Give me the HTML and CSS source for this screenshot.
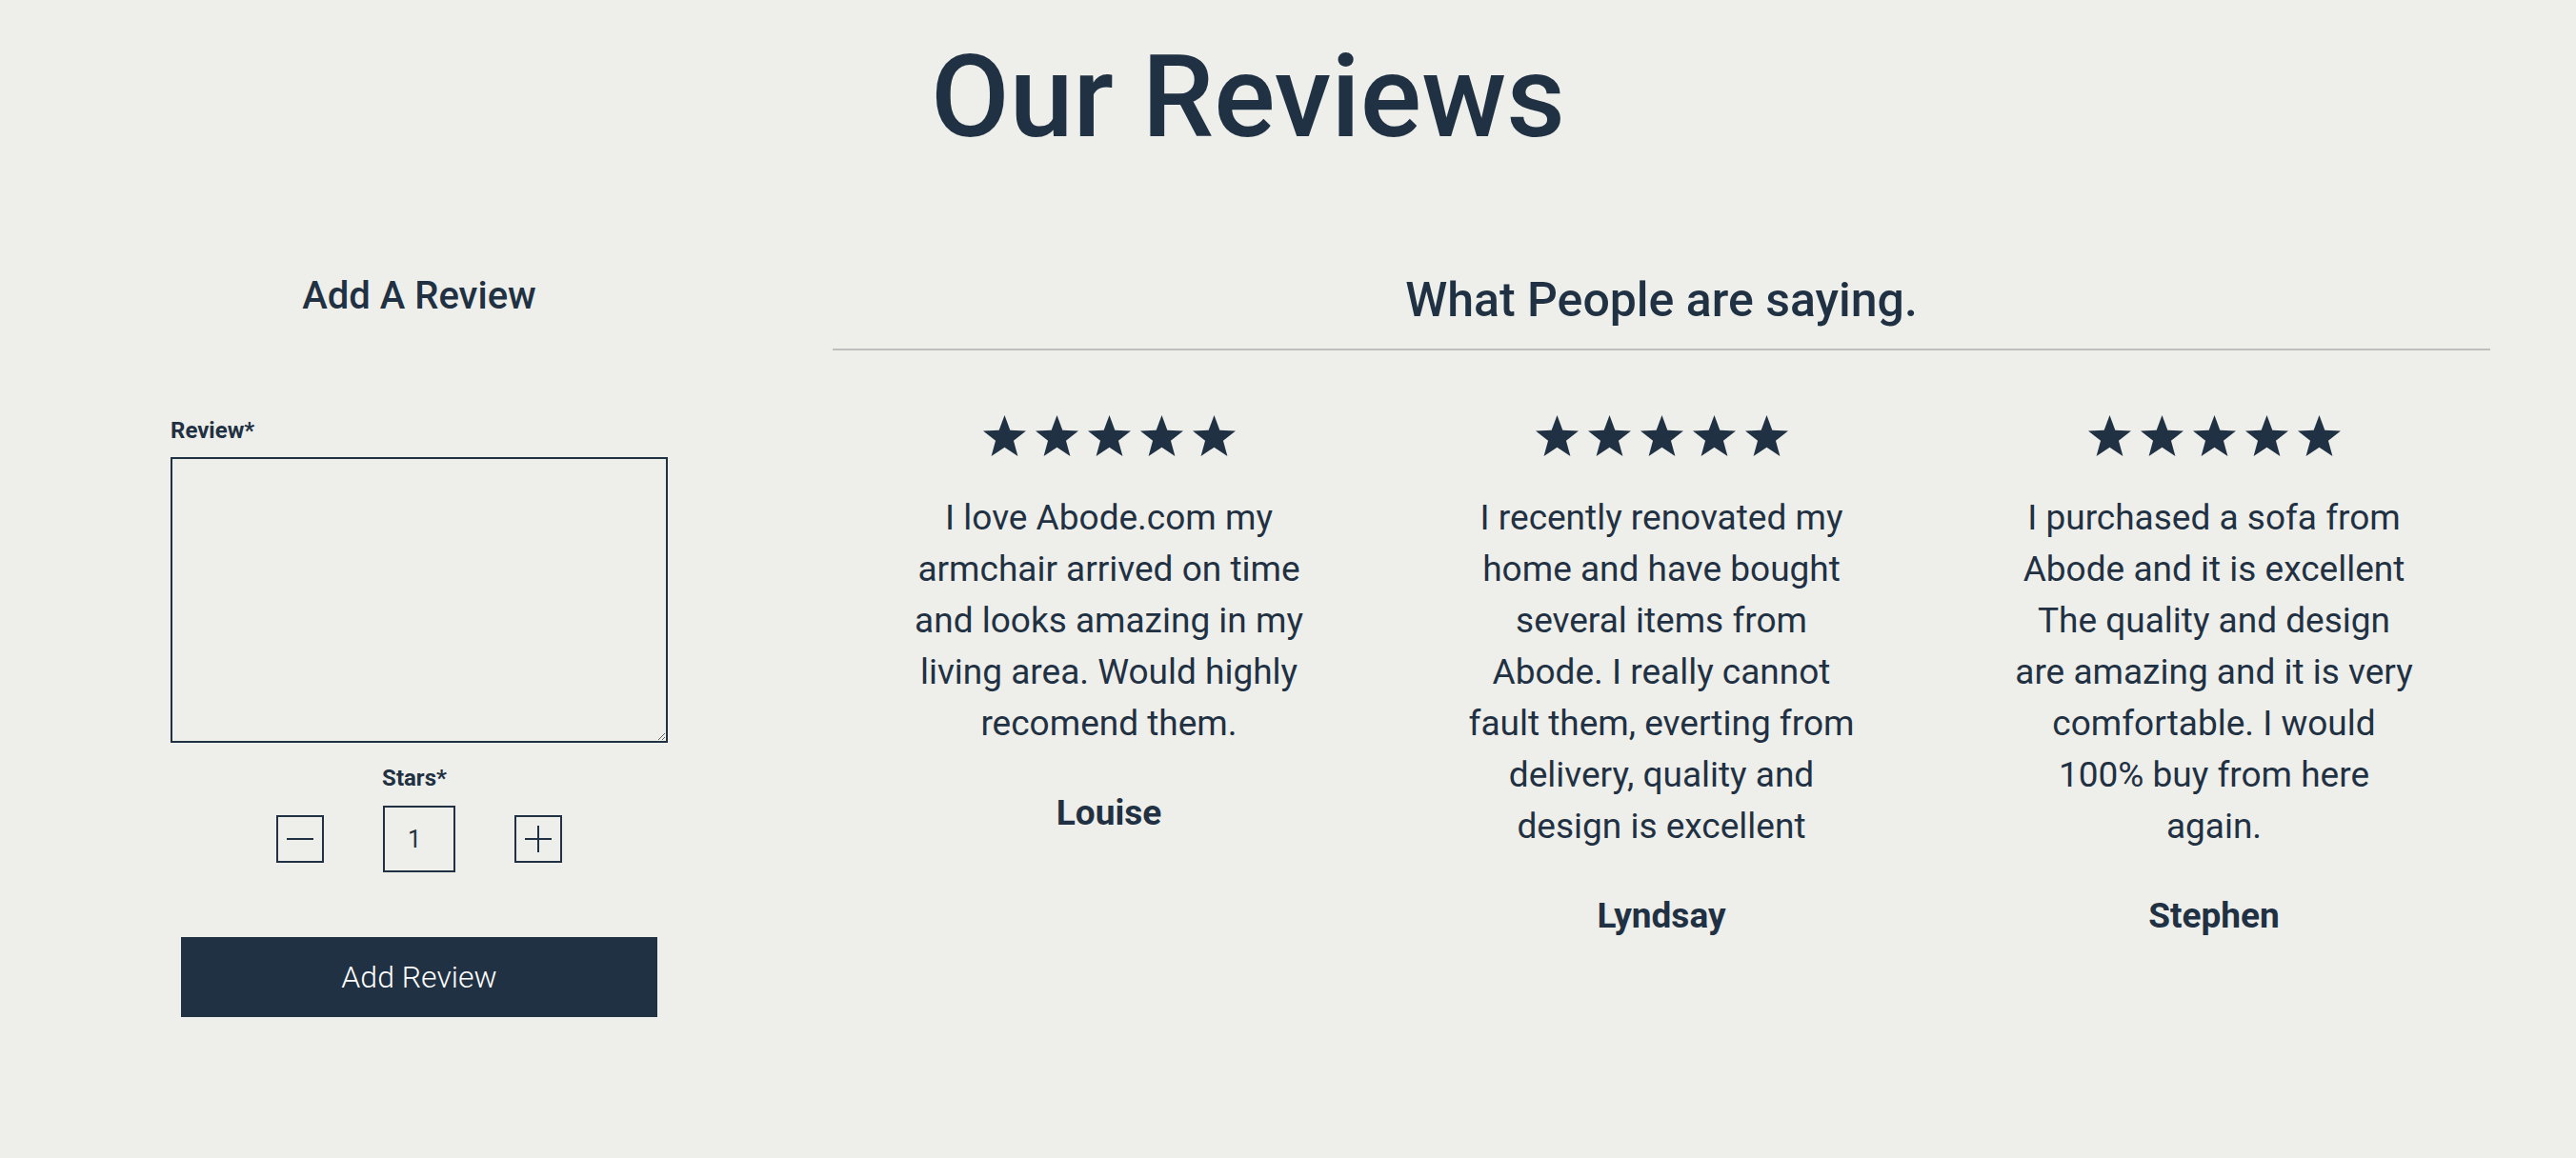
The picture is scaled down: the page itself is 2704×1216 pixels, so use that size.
FILE: index.html
```html
<!DOCTYPE html>
<html lang="en">
<head>
<meta charset="utf-8">
<title>Our Reviews</title>
<link rel="stylesheet" href="styles.css">
</head>
<body>
<main class="page">
  <h1 class="title">Our Reviews</h1>
  <div class="layout">
    <section class="add-review">
      <h2 class="add-title">Add A Review</h2>
      <form class="review-form">
        <label class="field-label" for="review">Review*</label>
        <textarea id="review" class="review-input"></textarea>
        <div class="stars-field">
          <span class="field-label stars-label">Stars*</span>
          <div class="stepper">
            <button type="button" class="step-btn" aria-label="decrease">
              <svg viewBox="0 0 28 28" width="28" height="28"><line x1="0" y1="14" x2="28" y2="14"/></svg>
            </button>
            <input class="step-value" type="text" value="1">
            <button type="button" class="step-btn" aria-label="increase">
              <svg viewBox="0 0 28 28" width="28" height="28"><line x1="0" y1="14" x2="28" y2="14"/><line x1="14" y1="0" x2="14" y2="28"/></svg>
            </button>
          </div>
        </div>
        <button type="submit" class="submit-btn">Add Review</button>
      </form>
    </section>

    <section class="reviews">
      <h2 class="reviews-title">What People are saying.</h2>
      <div class="review-grid">
        <article class="review">
          <div class="stars">
            <svg class="star" viewBox="0 0 95.1 90.45"><polygon points="47.55,0 59.89,33.01 95.1,34.55 67.52,56.49 76.94,90.45 47.55,71 18.16,90.45 27.58,56.49 0,34.55 35.21,33.01"/></svg>
            <svg class="star" viewBox="0 0 95.1 90.45"><polygon points="47.55,0 59.89,33.01 95.1,34.55 67.52,56.49 76.94,90.45 47.55,71 18.16,90.45 27.58,56.49 0,34.55 35.21,33.01"/></svg>
            <svg class="star" viewBox="0 0 95.1 90.45"><polygon points="47.55,0 59.89,33.01 95.1,34.55 67.52,56.49 76.94,90.45 47.55,71 18.16,90.45 27.58,56.49 0,34.55 35.21,33.01"/></svg>
            <svg class="star" viewBox="0 0 95.1 90.45"><polygon points="47.55,0 59.89,33.01 95.1,34.55 67.52,56.49 76.94,90.45 47.55,71 18.16,90.45 27.58,56.49 0,34.55 35.21,33.01"/></svg>
            <svg class="star" viewBox="0 0 95.1 90.45"><polygon points="47.55,0 59.89,33.01 95.1,34.55 67.52,56.49 76.94,90.45 47.55,71 18.16,90.45 27.58,56.49 0,34.55 35.21,33.01"/></svg>
          </div>
          <p class="review-text">I love Abode.com my armchair arrived on time and looks amazing in my living area. Would highly recomend them.</p>
          <p class="review-name">Louise</p>
        </article>
        <article class="review">
          <div class="stars">
            <svg class="star" viewBox="0 0 95.1 90.45"><polygon points="47.55,0 59.89,33.01 95.1,34.55 67.52,56.49 76.94,90.45 47.55,71 18.16,90.45 27.58,56.49 0,34.55 35.21,33.01"/></svg>
            <svg class="star" viewBox="0 0 95.1 90.45"><polygon points="47.55,0 59.89,33.01 95.1,34.55 67.52,56.49 76.94,90.45 47.55,71 18.16,90.45 27.58,56.49 0,34.55 35.21,33.01"/></svg>
            <svg class="star" viewBox="0 0 95.1 90.45"><polygon points="47.55,0 59.89,33.01 95.1,34.55 67.52,56.49 76.94,90.45 47.55,71 18.16,90.45 27.58,56.49 0,34.55 35.21,33.01"/></svg>
            <svg class="star" viewBox="0 0 95.1 90.45"><polygon points="47.55,0 59.89,33.01 95.1,34.55 67.52,56.49 76.94,90.45 47.55,71 18.16,90.45 27.58,56.49 0,34.55 35.21,33.01"/></svg>
            <svg class="star" viewBox="0 0 95.1 90.45"><polygon points="47.55,0 59.89,33.01 95.1,34.55 67.52,56.49 76.94,90.45 47.55,71 18.16,90.45 27.58,56.49 0,34.55 35.21,33.01"/></svg>
          </div>
          <p class="review-text">I recently renovated my home and have bought several items from Abode. I really cannot fault them, everting from delivery, quality and design is excellent</p>
          <p class="review-name">Lyndsay</p>
        </article>
        <article class="review">
          <div class="stars">
            <svg class="star" viewBox="0 0 95.1 90.45"><polygon points="47.55,0 59.89,33.01 95.1,34.55 67.52,56.49 76.94,90.45 47.55,71 18.16,90.45 27.58,56.49 0,34.55 35.21,33.01"/></svg>
            <svg class="star" viewBox="0 0 95.1 90.45"><polygon points="47.55,0 59.89,33.01 95.1,34.55 67.52,56.49 76.94,90.45 47.55,71 18.16,90.45 27.58,56.49 0,34.55 35.21,33.01"/></svg>
            <svg class="star" viewBox="0 0 95.1 90.45"><polygon points="47.55,0 59.89,33.01 95.1,34.55 67.52,56.49 76.94,90.45 47.55,71 18.16,90.45 27.58,56.49 0,34.55 35.21,33.01"/></svg>
            <svg class="star" viewBox="0 0 95.1 90.45"><polygon points="47.55,0 59.89,33.01 95.1,34.55 67.52,56.49 76.94,90.45 47.55,71 18.16,90.45 27.58,56.49 0,34.55 35.21,33.01"/></svg>
            <svg class="star" viewBox="0 0 95.1 90.45"><polygon points="47.55,0 59.89,33.01 95.1,34.55 67.52,56.49 76.94,90.45 47.55,71 18.16,90.45 27.58,56.49 0,34.55 35.21,33.01"/></svg>
          </div>
          <p class="review-text">I purchased a sofa from Abode and it is excellent The quality and design are amazing and it is very comfortable. I would 100% buy from here again.</p>
          <p class="review-name">Stephen</p>
        </article>
      </div>
    </section>
  </div>
</main>
</body>
</html>
```

FILE: styles.css
```css
html, body {
  margin: 0;
  padding: 0;
  background: #eeeeea;
}

body {
  font-family: Roboto, "Liberation Sans", Arial, sans-serif;
  color: #1f3142;
}

.page {
  width: 2620px;
  padding: 0 6px;
  box-sizing: border-box;
}

.title {
  margin: 41px 0 0;
  font-size: 120px;
  line-height: 122px;
  font-weight: 500;
  text-align: center;
}

.layout {
  margin-top: 121px;
  display: grid;
  grid-template-columns: 868px 1fr;
  align-items: start;
}

/* ---------- Add review form ---------- */
.add-review {
  display: flex;
  flex-direction: column;
  align-items: center;
}

.add-title {
  margin: 0;
  padding-top: 2px;
  font-size: 40px;
  line-height: 50px;
  font-weight: 500;
  text-align: center;
}

.review-form {
  margin-top: 102px;
  width: 522px;
  display: flex;
  flex-direction: column;
  align-items: center;
}

.field-label {
  display: block;
  align-self: flex-start;
  font-size: 24px;
  line-height: 29px;
  font-weight: 700;
}

.review-input {
  display: block;
  margin-top: 13px;
  width: 522px;
  height: 300px;
  box-sizing: border-box;
  border: 2px solid #1f3142;
  background: transparent;
  font-family: inherit;
  font-size: 24px;
  color: #1f3142;
  padding: 8px;
}

.stars-field {
  margin-top: 23px;
  display: flex;
  flex-direction: column;
  align-items: center;
}

.stars-field .stars-label {
  align-self: center;
  padding-right: 10px;
}

.stepper {
  margin-top: 14px;
  display: flex;
  align-items: center;
  gap: 62px;
}

.step-btn {
  width: 50px;
  height: 50px;
  box-sizing: border-box;
  border: 2px solid #1f3142;
  background: transparent;
  padding: 0;
  display: grid;
  place-items: center;
  cursor: pointer;
}

.step-btn svg {
  display: block;
  stroke: #1f3142;
  stroke-width: 2;
}

.step-value {
  width: 76px;
  height: 70px;
  box-sizing: border-box;
  border: 2px solid #1f3142;
  background: transparent;
  padding: 0 0 0 24px;
  font-family: inherit;
  font-size: 25px;
  color: #1f3142;
  outline: none;
}

.submit-btn {
  margin-top: 68px;
  width: 500px;
  height: 84px;
  border: 0;
  background: #1f3142;
  color: #ffffff;
  font-family: inherit;
  font-size: 32px;
  font-weight: 300;
  cursor: pointer;
}

/* ---------- Reviews ---------- */
.reviews-title {
  margin: 0;
  padding-bottom: 20px;
  border-bottom: 2px solid #bfc0bd;
  font-size: 50px;
  line-height: 62px;
  font-weight: 500;
  text-align: center;
}

.review-grid {
  margin-top: 68px;
  display: grid;
  grid-template-columns: repeat(3, 1fr);
}

.review {
  display: flex;
  flex-direction: column;
  align-items: center;
  text-align: center;
}

.stars {
  display: flex;
  gap: 10px;
  height: 43px;
}

.star {
  width: 45px;
  height: 43px;
  fill: #1f3142;
}

.review-text {
  margin: 38px 0 0;
  max-width: 425px;
  font-size: 37px;
  line-height: 54px;
  font-weight: 400;
}

.review-name {
  margin: 40px 0 0;
  font-size: 37px;
  line-height: 54px;
  font-weight: 700;
}
```
